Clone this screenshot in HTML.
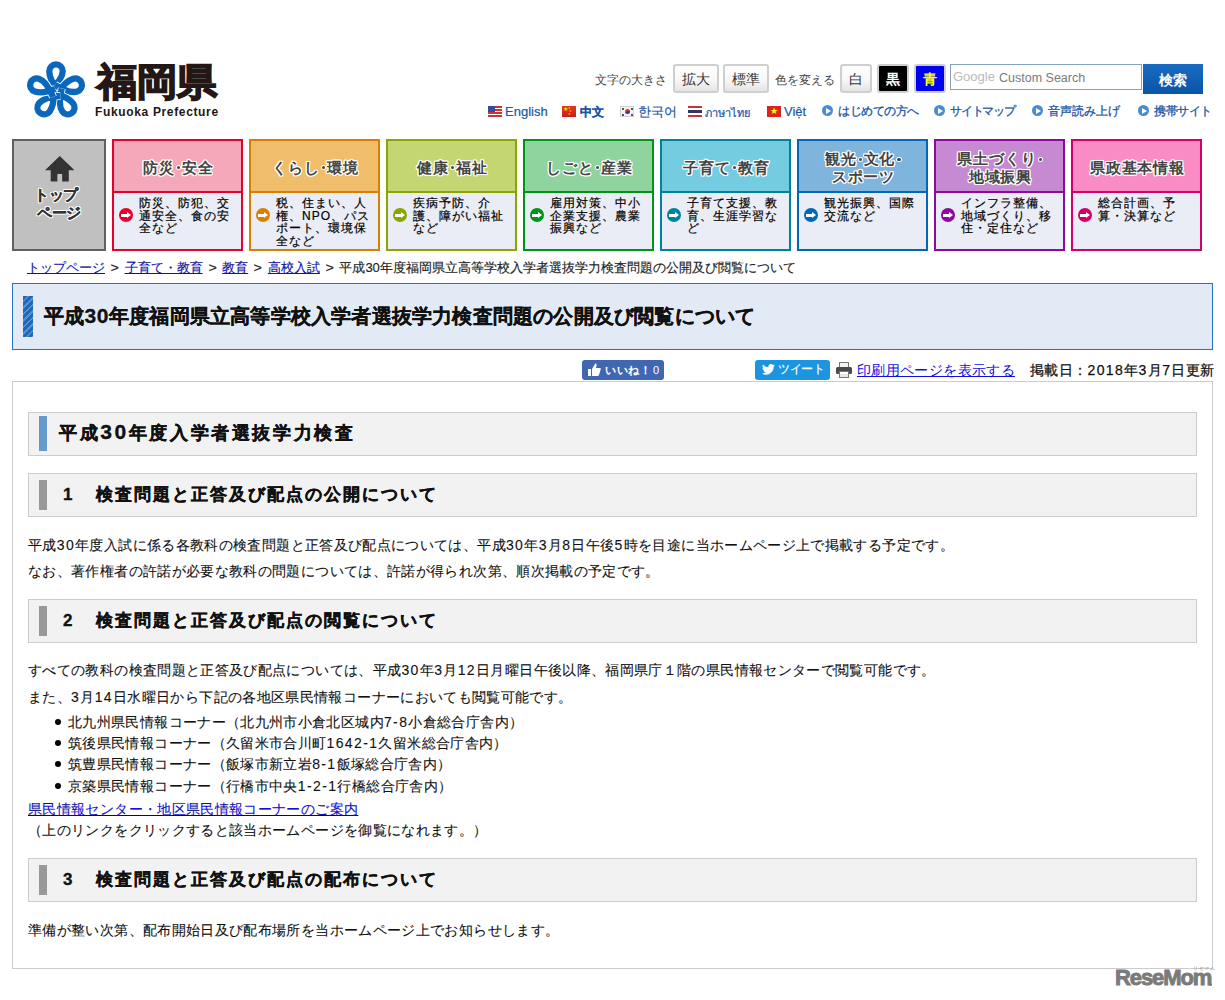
<!DOCTYPE html>
<html><head><meta charset="utf-8">
<style>
*{margin:0;padding:0;box-sizing:border-box}
html,body{width:1225px;height:1000px;overflow:hidden;background:#fff}
body{font-family:"Liberation Sans",sans-serif;color:#222;position:relative}
.a{position:absolute;white-space:nowrap}
/* header */
#logo{left:20px;top:55px;width:70px;height:70px}
#kanji{left:96.5px;top:57px;font-size:38px;transform:scaleX(1.056);transform-origin:0 0;font-weight:bold;color:#231815;letter-spacing:0px;-webkit-text-stroke:1.6px #231815;line-height:50px}
#fp{left:95px;top:104px;font-size:12px;font-weight:bold;color:#231815;letter-spacing:0.65px;line-height:16px}
.lbl{font-size:12px;color:#444;line-height:16px;top:72px}
.btn{top:64px;height:29px;border:2px solid #cfcfcf;border-radius:3px;background:linear-gradient(#fff 0%,#f8f8f8 55%,#e4e4e4 100%);font-size:14px;color:#333;text-align:center;line-height:27px}
#srch{left:950px;top:64px;width:192px;height:26px;border:1px solid #86a3c4;background:#fff}
#srchb{left:1143px;top:64px;width:60px;height:30px;background:linear-gradient(#1a6cc2,#0a55a6);color:#fff;font-size:14px;font-weight:bold;text-align:center;line-height:32px}
.lang{top:104px;font-size:13px;color:#1a56a8;line-height:16px;-webkit-text-stroke:0.2px #1a56a8}
.jl{font-size:12px;top:103px;-webkit-text-stroke:0.3px #1a56a8}
.flag{position:absolute;top:106px;width:14px;height:11px}
.circ{position:absolute;top:105px;width:11px;height:11px;border-radius:50%;background:#4a8ccc}
.circ:after{content:"";position:absolute;left:4px;top:2.5px;border-left:5px solid #fff;border-top:3px solid transparent;border-bottom:3px solid transparent}
/* tiles */
.tile{position:absolute;top:139px;width:131px;height:112px;border:2px solid;background:#eaedf5}
.tile .hd{position:absolute;left:0;top:0;right:0;height:52px;border-bottom:2px solid;font-size:15px;letter-spacing:0.9px;line-height:18px;padding-top:17.5px;padding-left:2px;font-weight:bold;color:#444;text-align:center;white-space:nowrap;text-shadow:1px 0 0 #fff,-1px 0 0 #fff,0 1px 0 #fff,0 -1px 0 #fff,1px 1px 0 #fff,-1px -1px 0 #fff,1px -1px 0 #fff,-1px 1px 0 #fff,0 0 2px #fff}
.tile .hd.two{padding-top:9px}
.tile .hd .d{display:inline-block;width:7px;height:10px;position:relative;font-size:0}
.tile .hd .d:after{content:"";position:absolute;left:2px;top:2.5px;width:3.2px;height:3.2px;border-radius:50%;background:#444;box-shadow:0 0 0 1px #fff}
.tile .bd{position:absolute;left:25px;top:55.8px;font-size:12px;letter-spacing:1.05px;line-height:12.7px;color:#000;white-space:nowrap;-webkit-text-stroke:0.2px #000}
.tile .ar{position:absolute;left:5px;top:67.3px;width:14px;height:14px;border-radius:50%}
.tile .ar:before{content:"";position:absolute;left:2px;top:5.8px;width:6.5px;height:2.6px;background:#fff}
.tile .ar:after{content:"";position:absolute;left:8px;top:3.5px;border-left:4.4px solid #fff;border-top:3.6px solid transparent;border-bottom:3.6px solid transparent}
/* body */
#bc{left:27px;top:259px;font-size:13px;line-height:18px;color:#222;-webkit-text-stroke:0.15px #222}
#bc i{font-style:normal;display:inline-block;margin:0 6px 0 6px;transform:scaleX(1.1)}
#bc a{color:#1010e0;text-decoration:underline}
#ttl{left:12px;top:283px;width:1201px;height:67px;border:1px solid #2a70b8;background:#e2ebf5}
#ttl .bar{position:absolute;left:10px;top:12px;width:10px;height:41px;background:repeating-linear-gradient(135deg,#1c69b8 0 3px,#5a8fcf 3px 4.6px)}
#ttl .t{position:absolute;left:31px;top:18.5px;font-size:20px;letter-spacing:0.2px;font-weight:bold;color:#111;line-height:26px;white-space:nowrap;-webkit-text-stroke:0.3px #111}
#cbox{left:12px;top:381px;width:1201px;height:588px;border:1px solid #ccc}
.h{position:absolute;left:28px;width:1169px;height:44px;border:1px solid #ccc;background:#f2f2f2}
.h .bar{position:absolute;left:10px;top:6px;width:8px;height:30px;background:#999}
.h .bar.b{top:3px;height:35px;background:#6699cc}
.h .t{position:absolute;left:30px;top:9px;font-size:17px;font-weight:bold;color:#111;letter-spacing:2px;line-height:24px;white-space:nowrap;-webkit-text-stroke:0.35px #111}
.h .t.b{font-size:18px;letter-spacing:2.6px;top:7px}
.h .t.b .dg{letter-spacing:2.6px;font-size:21px}
.h .t .sp{display:inline-block;width:22px}
.p{position:absolute;left:28px;font-size:14px;letter-spacing:0.36px;color:#111;line-height:18px;white-space:nowrap}
.n{letter-spacing:1.4px}
.p,.li{-webkit-text-stroke:0.1px #111}
.li{position:absolute;left:68px;font-size:14px;letter-spacing:0.36px;color:#111;line-height:18px;white-space:nowrap}
.li:before{content:"";position:absolute;left:-13.5px;top:6px;width:6px;height:6px;border-radius:50%;background:#000}
</style></head><body>

<!-- LOGO -->
<svg class="a" id="logo" viewBox="0 0 70 70">
  <defs><path id="pt" d="M-6,-1 C1,-7 6.4,-13 6.4,-19.2 A6.4 6.4 0 1 0 -6.4,-19.2 C-6.4,-12 -2,-6 2,-1.5" fill="none"/></defs>
  <g transform="translate(36,36.3) scale(1.05)" fill="none" stroke-linecap="butt">
    <g transform="rotate(0)"><use href="#pt" stroke="#fff" stroke-width="7.6"/><use href="#pt" stroke="#0a67bd" stroke-width="6"/></g>
    <g transform="rotate(72)"><use href="#pt" stroke="#fff" stroke-width="7.6"/><use href="#pt" stroke="#0a67bd" stroke-width="6"/></g>
    <g transform="rotate(144)"><use href="#pt" stroke="#fff" stroke-width="7.6"/><use href="#pt" stroke="#0a67bd" stroke-width="6"/></g>
    <g transform="rotate(216)"><use href="#pt" stroke="#fff" stroke-width="7.6"/><use href="#pt" stroke="#0a67bd" stroke-width="6"/></g>
    <g transform="rotate(288)"><use href="#pt" stroke="#fff" stroke-width="7.6"/><use href="#pt" stroke="#0a67bd" stroke-width="6"/></g>
  </g>
</svg>
<div class="a" id="kanji">福岡県</div>
<div class="a" id="fp">Fukuoka Prefecture</div>

<div class="a lbl" style="left:595px">文字の大きさ</div>
<div class="a btn" style="left:673px;width:46px">拡大</div>
<div class="a btn" style="left:723px;width:46px">標準</div>
<div class="a lbl" style="left:775px">色を変える</div>
<div class="a btn" style="left:840px;width:32px">白</div>
<div class="a btn" style="left:877px;width:32px;background:#000;color:#fff;font-weight:bold">黒</div>
<div class="a btn" style="left:914px;width:32px;background:#0000f5;color:#ff0;font-weight:bold">青</div>
<div class="a" id="srch"></div>
<div class="a" style="left:953px;top:69px;font-size:13px;color:#bbb;line-height:16px">Google</div>
<div class="a" style="left:999px;top:70px;font-size:12.5px;color:#7a7a7a;line-height:16px">Custom Search</div>
<div class="a" id="srchb">検索</div>

<div class="flag" style="left:488px;background:repeating-linear-gradient(#c33 0 1.5px,#fff 1.5px 3px)"><div style="position:absolute;left:0;top:0;width:7px;height:6px;background:#3a4a9a"></div></div>
<div class="a lang" style="left:505px">English</div>
<div class="flag" style="left:562px;background:linear-gradient(#e03a22,#c8201a);color:#ffde00;font-size:5px;line-height:5px;overflow:hidden"><span style="position:absolute;left:1px;top:1px;font-size:6px">★</span><span style="position:absolute;left:6px;top:0px;font-size:3px">★</span><span style="position:absolute;left:7px;top:3px;font-size:3px">★</span><span style="position:absolute;left:6px;top:6px;font-size:3px">★</span></div>
<div class="a lang" style="left:580px;font-weight:bold;font-size:12px;top:104px">中文</div>
<div class="flag" style="left:620px;background:#f4f4f4;border:1px solid #d0d0d0"><div style="position:absolute;left:3.5px;top:2px;width:5px;height:5px;border-radius:50%;background:linear-gradient(160deg,#d33 50%,#33a 50%)"></div><div style="position:absolute;left:0.5px;top:0.5px;width:2px;height:2px;background:#555"></div><div style="position:absolute;right:0.5px;top:0.5px;width:2px;height:2px;background:#555"></div><div style="position:absolute;left:0.5px;bottom:0.5px;width:2px;height:2px;background:#555"></div><div style="position:absolute;right:0.5px;bottom:0.5px;width:2px;height:2px;background:#555"></div></div>
<div class="a lang" style="left:638px;font-size:12.5px">한국어</div>
<div class="flag" style="left:688px;background:linear-gradient(#c33 0 18%,#fff 18% 36%,#336 36% 64%,#fff 64% 82%,#c33 82%)"></div>
<div class="a lang" style="left:705px;font-size:11px;top:105px">ภาษาไทย</div>
<div class="flag" style="left:767px;background:#d9261c;color:#ff0;font-size:9px;line-height:11px;text-align:center">★</div>
<div class="a lang" style="left:784px">Việt</div>
<div class="circ" style="left:822px"></div>
<div class="a lang jl" style="left:838px;letter-spacing:-0.5px">はじめての方へ</div>
<div class="circ" style="left:934px"></div>
<div class="a lang jl" style="left:950px;letter-spacing:-1.2px">サイトマップ</div>
<div class="circ" style="left:1032px"></div>
<div class="a lang jl" style="left:1048px">音声読み上げ</div>
<div class="circ" style="left:1138px"></div>
<div class="a lang jl" style="left:1154px;letter-spacing:-0.4px">携帯サイト</div>

<!-- TILES -->
<div class="tile" style="left:112px;border-color:#e8002d"><div class="hd" style="background:#f5a8ba;border-color:#e8002d">防災<span class=d>・</span>安全</div><div class="ar" style="background:#e8002d"></div><div class="bd">防災、防犯、交<br>通安全、食の安<br>全など</div></div>
<div class="tile" style="left:249px;border-color:#d98000"><div class="hd" style="background:#f0be6a;border-color:#d98000">くらし<span class=d>・</span>環境</div><div class="ar" style="background:#d98000"></div><div class="bd">税、住まい、人<br>権、NPO、パス<br>ポート、環境保<br>全など</div></div>
<div class="tile" style="left:386px;border-color:#8aa600"><div class="hd" style="background:#c4d672;border-color:#8aa600">健康<span class=d>・</span>福祉</div><div class="ar" style="background:#8aa600"></div><div class="bd">疾病予防、介<br>護、障がい福祉<br>など</div></div>
<div class="tile" style="left:523px;border-color:#009418"><div class="hd" style="background:#8fd49f;border-color:#009418">しごと<span class=d>・</span>産業</div><div class="ar" style="background:#009418"></div><div class="bd">雇用対策、中小<br>企業支援、農業<br>振興など</div></div>
<div class="tile" style="left:660px;border-color:#00829a"><div class="hd" style="background:#74cce0;border-color:#00829a">子育て<span class=d>・</span>教育</div><div class="ar" style="background:#00829a"></div><div class="bd">子育て支援、教<br>育、生涯学習な<br>ど</div></div>
<div class="tile" style="left:797px;border-color:#0068b6"><div class="hd two" style="background:#7fb5dc;border-color:#0068b6">観光<span class=d>・</span>文化<span class=d>・</span><br>スポーツ</div><div class="ar" style="background:#0068b6"></div><div class="bd">観光振興、国際<br>交流など</div></div>
<div class="tile" style="left:934px;border-color:#8c0a9e"><div class="hd two" style="background:#c68ad2;border-color:#8c0a9e">県土づくり<span class=d>・</span><br>地域振興</div><div class="ar" style="background:#8c0a9e"></div><div class="bd">インフラ整備、<br>地域づくり、移<br>住・定住など</div></div>
<div class="tile" style="left:1071px;border-color:#d4006a"><div class="hd" style="background:#f98cc4;border-color:#d4006a">県政基本情報</div><div class="ar" style="background:#d4006a"></div><div class="bd">総合計画、予<br>算・決算など</div></div>
<div class="tile" style="left:12px;width:94px;border:2px solid #606060;background:#c0c0c0">
<svg style="position:absolute;left:30.5px;top:15px" width="29.5" height="27.5" viewBox="0 0 31 29" preserveAspectRatio="none"><path d="M15.5,0 L31,15 L25,15 L25,27 L18,27 L18,19 L13,19 L13,27 L6,27 L6,15 L0,15 Z" fill="#333"/></svg>
<div style="position:absolute;left:0;right:0;top:45px;text-align:center;font-size:15px;letter-spacing:-0.3px;line-height:18px;color:#333;font-weight:bold;-webkit-text-stroke:0.3px #333;text-shadow:1px 0 0 #fff,-1px 0 0 #fff,0 1px 0 #fff,0 -1px 0 #fff,1px 1px 0 #fff,-1px -1px 0 #fff,1px -1px 0 #fff,-1px 1px 0 #fff,0 0 2px #fff"><span style="position:relative;left:-3px">トップ</span><br>ページ</div>
</div>


<!-- BREADCRUMB -->
<div class="a" id="bc"><a>トップページ</a><i>&gt;</i><a>子育て・教育</a><i>&gt;</i><a>教育</a><i>&gt;</i><a>高校入試</a><i>&gt;</i>平成30年度福岡県立高等学校入学者選抜学力検査問題の公開及び閲覧について</div>
<div class="a" id="ttl"><div class="bar"></div><div class="t">平成<span style="font-size:21px;letter-spacing:0.6px">30</span>年度福岡県立高等学校入学者選抜学力検査問題の公開及び閲覧について</div></div>

<!-- SOCIAL -->
<div class="a" style="left:582px;top:360px;width:82px;height:20px;background:#4267b2;border-radius:3px"></div>
<svg class="a" style="left:588px;top:363px" width="13" height="13" viewBox="0 0 13 13"><path d="M0,6 h3 v7 h-3z M4,6 L7,1 C8,0 9,1 8.5,3 L8,5 H12 C13,5 13,6 12.5,7 L11,12 C10.5,13 10,13 9,13 H4z" fill="#fff"/></svg>
<div class="a" style="left:605px;top:362px;font-size:11px;letter-spacing:0.5px;font-weight:bold;color:#fff;line-height:16px">いいね！</div>
<div class="a" style="left:653px;top:363px;font-size:11px;color:#fff;line-height:15px">0</div>
<div class="a" style="left:755px;top:360px;width:75px;height:20px;background:#1b95e0;border-radius:3px"></div>
<svg class="a" style="left:762px;top:364px" width="13" height="11" viewBox="0 0 24 20"><path d="M24,2.4c-.9.4-1.8.6-2.8.8 1-.6 1.8-1.6 2.2-2.7-1 .6-2 1-3.1 1.2C19.3.7 18 0 16.6 0c-2.7 0-4.9 2.2-4.9 4.9 0 .4 0 .8.1 1.1C7.7 5.8 4.1 3.9 1.7.9c-.4.7-.7 1.6-.7 2.5 0 1.7.9 3.2 2.2 4.1-.8 0-1.6-.2-2.2-.6v.1c0 2.4 1.7 4.4 3.9 4.8-.4.1-.8.2-1.3.2-.3 0-.6 0-.9-.1.6 2 2.4 3.4 4.6 3.4-1.7 1.3-3.8 2.1-6.1 2.1-.4 0-.8 0-1.2-.1 2.2 1.4 4.8 2.2 7.5 2.2 9.1 0 14-7.5 14-14v-.6c1-.7 1.8-1.6 2.5-2.5z" fill="#fff"/></svg>
<div class="a" style="left:778px;top:361px;font-size:12px;letter-spacing:-0.4px;color:#fff;line-height:16px;-webkit-text-stroke:0.2px #fff">ツイート</div>
<svg class="a" style="left:836px;top:362px" width="16" height="16" viewBox="0 0 16 16"><rect x="3.5" y="0.5" width="9" height="5" fill="#f4f4f4" stroke="#777"/><rect x="0" y="5" width="16" height="7" rx="1.5" fill="#4a4a4a"/><rect x="3.5" y="9.5" width="9" height="6" fill="#e8e8e8" stroke="#777"/><rect x="4" y="10" width="8" height="2" fill="#fff"/></svg>
<div class="a" style="left:857px;top:361px;font-size:14px;letter-spacing:0.36px;color:#1010e0;text-decoration:underline;line-height:18px">印刷用ページを表示する</div>
<div class="a" style="left:1030px;top:361px;font-size:14px;letter-spacing:0.36px;color:#111;line-height:18px;-webkit-text-stroke:0.25px #111">掲載日：<span class="n">2018</span>年<span class="n">3</span>月<span class="n">7</span>日更新</div>

<!-- CONTENT -->
<div class="a" id="cbox"></div>
<div class="h" style="top:412px"><div class="bar b"></div><div class="t b">平成<span class="dg">30</span>年度入学者選抜学力検査</div></div>
<div class="h" style="top:473px"><div class="bar"></div><div class="t" style="left:34px">1<span class="sp"></span>検査問題と正答及び配点の公開について</div></div>
<div class="p" style="top:536px">平成<span class="n">30</span>年度入試に係る各教科の検査問題と正答及び配点については、平成<span class="n">30</span>年<span class="n">3</span>月<span class="n">8</span>日午後<span class="n">5</span>時を目途に当ホームページ上で掲載する予定です。</div>
<div class="p" style="top:562px">なお、著作権者の許諾が必要な教科の問題については、許諾が得られ次第、順次掲載の予定です。</div>
<div class="h" style="top:599px"><div class="bar"></div><div class="t" style="left:34px">2<span class="sp"></span>検査問題と正答及び配点の閲覧について</div></div>
<div class="p" style="top:661px">すべての教科の検査問題と正答及び配点については、平成<span class="n">30</span>年<span class="n">3</span>月<span class="n">12</span>日月曜日午後以降、福岡県庁１階の県民情報センターで閲覧可能です。</div>
<div class="p" style="top:688px">また、<span class="n">3</span>月<span class="n">14</span>日水曜日から下記の各地区県民情報コーナーにおいても閲覧可能です。</div>
<div class="li" style="top:713px">北九州県民情報コーナー（北九州市小倉北区城内<span class="n">7-8</span>小倉総合庁舎内）</div>
<div class="li" style="top:734px">筑後県民情報コーナー（久留米市合川町<span class="n">1642-1</span>久留米総合庁舎内）</div>
<div class="li" style="top:755px">筑豊県民情報コーナー（飯塚市新立岩<span class="n">8-1</span>飯塚総合庁舎内）</div>
<div class="li" style="top:777px">京築県民情報コーナー（行橋市中央<span class="n">1-2-1</span>行橋総合庁舎内）</div>
<div class="p" style="top:800px;color:#1010e0;text-decoration:underline">県民情報センター・地区県民情報コーナーのご案内</div>
<div class="p" style="top:821px">（上のリンクをクリックすると該当ホームページを御覧になれます。）</div>
<div class="h" style="top:858px"><div class="bar"></div><div class="t" style="left:34px">3<span class="sp"></span>検査問題と正答及び配点の配布について</div></div>
<div class="p" style="top:921px">準備が整い次第、配布開始日及び配布場所を当ホームページ上でお知らせします。</div>

<!-- RESEMOM -->
<div class="a" style="left:1115px;top:965px;font-size:22px;font-weight:bold;color:#7a7a7a;letter-spacing:-1.1px;line-height:26px;-webkit-text-stroke:0.9px #7a7a7a">ReseMom</div>
<div class="a" style="left:1209px;top:983px;width:3px;height:3px;border-radius:50%;background:#7a7a7a"></div>
<div class="a" style="left:1193px;top:965px;font-size:5px;color:#888;line-height:6px;letter-spacing:0.5px">リセマム</div>
</body></html>
